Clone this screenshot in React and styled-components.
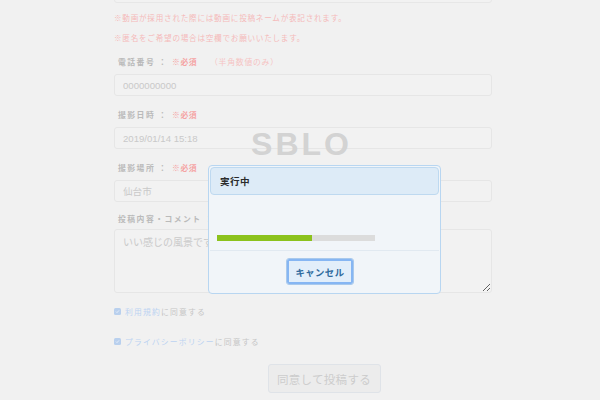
import React from 'react';
import styled, { createGlobalStyle } from 'styled-components';

const GlobalStyle = createGlobalStyle`
  html, body {
    margin: 0;
    padding: 0;
    background: #f1f1f1;
    font-family: "Noto Sans CJK JP", "Liberation Sans", sans-serif;
  }
`;

const Page = styled.div`
  width: 600px;
  height: 400px;
  overflow: hidden;
  position: relative;
`;

const Form = styled.div`
  width: 378px;
  margin-left: 114px;
`;

const TopStub = styled.div`
  height: 22px;
  margin-top: -19px;
  border: 1px solid #e7e7e7;
  border-radius: 3px;
  background: #f2f2f2;
  box-sizing: border-box;
`;

const Notes = styled.div`
  padding-top: 5px;
`;

const Note = styled.div`
  font-size: 7.6px;
  line-height: 20px;
  letter-spacing: 0.75px;
  color: #f5baba;
`;

const Group = styled.div`
  margin-bottom: ${p => p.$mb ?? 5}px;
`;

const LabelRow = styled.div`
  display: flex;
  align-items: center;
  height: ${p => p.$h || 26}px;
  padding-left: 4px;
  font-size: 7.8px;
  letter-spacing: 1.5px;
`;

const Label = styled.span`
  color: #bababa;
  font-weight: 700;
  width: ${p => p.$w || '54px'};
`;

const Required = styled.span`
  color: #f5a3a3;
  font-weight: 700;
  letter-spacing: 0.6px;
  width: 38px;
`;

const Hint = styled.span`
  color: #f6c3c3;
  letter-spacing: 0.8px;
`;

const Field = styled.input`
  display: block;
  width: 100%;
  height: 22px;
  box-sizing: border-box;
  border: 1px solid #e6e6e6;
  border-radius: 3px;
  background: #f2f2f2;
  padding: 0 8px;
  font-family: "Liberation Sans", "Noto Sans CJK JP", sans-serif;
  font-size: 9.6px;
  color: #c9c9c9;
  outline: none;
`;

const Area = styled.textarea`
  display: block;
  width: 100%;
  height: 64px;
  box-sizing: border-box;
  border: 1px solid #e6e6e6;
  border-radius: 3px;
  background: #f2f2f2;
  padding: 4px 8px;
  font-family: "Liberation Sans", "Noto Sans CJK JP", sans-serif;
  font-size: 10px;
  color: #cacaca;
  outline: none;
  resize: vertical;
`;

const Agree = styled.div`
  display: flex;
  align-items: center;
  height: 30px;
  font-size: 7.8px;
  letter-spacing: 1.2px;
  color: #c6c6c6;
`;

const Check = styled.span`
  width: 7px;
  height: 7px;
  border-radius: 1.5px;
  background: #b9d0ee;
  margin-right: 4px;
  display: flex;
  align-items: center;
  justify-content: center;
`;

const Link = styled.span`
  color: #bcd3f2;
`;

const SubmitRow = styled.div`
  display: flex;
  justify-content: center;
  margin-top: 8px;
  padding-left: 42px;
`;

const Submit = styled.button`
  width: 113px;
  height: 29px;
  border: 1px solid #dfe3e8;
  border-radius: 3px;
  background: #ececec;
  color: #cdcdcd;
  font-family: "Noto Sans CJK JP", sans-serif;
  font-size: 11.5px;
  letter-spacing: 0.3px;
  padding: 0;
`;

const Layer = styled.div`
  position: absolute;
  inset: 0;
  display: flex;
  flex-direction: column;
  align-items: center;
  padding-top: 128px;
  box-sizing: border-box;
`;

const Logo = styled.div`
  font-family: "Liberation Sans", sans-serif;
  font-weight: 700;
  font-size: 32px;
  line-height: 32px;
  letter-spacing: 3px;
  padding-left: 3px;
  color: #d3d3d3;
  margin-bottom: 5px;
`;

const Dialog = styled.div`
  width: 233px;
  box-sizing: border-box;
  border: 1px solid #b8d6f1;
  border-radius: 4px;
  background: #f1f5f9;
  padding: 1px;
  margin-left: 49px;
`;

const Title = styled.div`
  height: 28px;
  box-sizing: border-box;
  border: 1px solid #bed9f0;
  border-radius: 4px;
  background: #ddebf7;
  display: flex;
  align-items: center;
  padding-left: 9px;
  font-size: 9.6px;
  font-weight: 700;
  letter-spacing: 0.4px;
  color: #2b2b2b;
`;

const Body = styled.div`
  height: 55px;
  padding: 40px 0 0 7px;
  box-sizing: border-box;
`;

const Track = styled.div`
  width: 158px;
  height: 6px;
  background: #dcdcdc;
`;

const Fill = styled.div`
  height: 100%;
  background: #8cc21d;
`;

const Footer = styled.div`
  height: 41px;
  border-top: 1px solid #e1e9f1;
  display: flex;
  align-items: center;
  justify-content: center;
  padding-right: 9px;
`;

const Cancel = styled.button`
  width: 68px;
  height: 27px;
  box-sizing: border-box;
  border: 1px solid #a9c9ec;
  border-radius: 3px;
  box-shadow: 0 0 0 2px #86b6f3 inset;
  background: #e2eefa;
  color: #2e6a9d;
  font-family: "Noto Sans CJK JP", sans-serif;
  font-size: 9.4px;
  font-weight: 700;
  letter-spacing: 0.4px;
  padding: 0;
  outline: none;
`;

const CheckMark = () => (
  <svg width="5" height="5" viewBox="0 0 10 10">
    <path d="M2 5.2l2 2 4-4.4" stroke="#eaf1fb" strokeWidth="1.8" fill="none" />
  </svg>
);

const progress = 60;

export default function App() {
  return (
    <Page>
      <GlobalStyle />
      <Form>
        <TopStub />
        <Notes>
          <Note>※動画が採用された際には動画に投稿ネームが表記されます。</Note>
          <Note>※匿名をご希望の場合は空欄でお願いいたします。</Note>
        </Notes>
        <Group>
          <LabelRow>
            <Label>電話番号 ：</Label>
            <Required>※必須</Required>
            <Hint>（半角数値のみ）</Hint>
          </LabelRow>
          <Field readOnly value="0000000000" />
        </Group>
        <Group>
          <LabelRow>
            <Label>撮影日時 ：</Label>
            <Required>※必須</Required>
          </LabelRow>
          <Field readOnly value="2019/01/14 15:18" />
        </Group>
        <Group>
          <LabelRow>
            <Label>撮影場所 ：</Label>
            <Required>※必須</Required>
          </LabelRow>
          <Field readOnly value="仙台市" />
        </Group>
        <Group $mb={3}>
          <LabelRow $h={22}>
            <Label $w="auto">投稿内容・コメント ：</Label>
          </LabelRow>
          <Area readOnly value="いい感じの風景です。" />
        </Group>
        <Agree>
          <Check><CheckMark /></Check>
          <Link>利用規約</Link>に同意する
        </Agree>
        <Agree>
          <Check><CheckMark /></Check>
          <Link>プライバシーポリシー</Link>に同意する
        </Agree>
        <SubmitRow>
          <Submit>同意して投稿する</Submit>
        </SubmitRow>
      </Form>
      <Layer>
        <Logo>SBLO</Logo>
        <Dialog>
          <Title>実行中</Title>
          <Body>
            <Track>
              <Fill style={{ width: `${progress}%` }} />
            </Track>
          </Body>
          <Footer>
            <Cancel>キャンセル</Cancel>
          </Footer>
        </Dialog>
      </Layer>
    </Page>
  );
}
